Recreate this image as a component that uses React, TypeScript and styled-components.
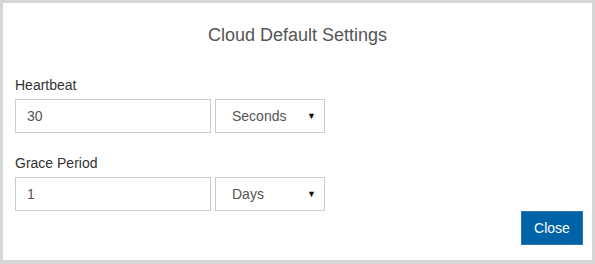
import React from 'react'
import styled, { createGlobalStyle } from 'styled-components'

const Global = createGlobalStyle`
  html, body {
    margin: 0;
    padding: 0;
    background: #ffffff;
  }
  body {
    font-family: 'Liberation Sans', Arial, sans-serif;
  }
`

const Dialog = styled.div`
  box-sizing: border-box;
  width: 595px;
  height: 264px;
  border: 3px solid #d6d6d6;
  border-bottom-width: 4px;
  background: #fff;
  display: flex;
  flex-direction: column;
`

const Titulo = styled.h1`
  margin: 20px 0 0;
  font-size: 18px;
  line-height: 24px;
  font-weight: normal;
  color: #555555;
  text-align: center;
`

const Form = styled.form`
  margin-top: 28px;
  padding-left: 12px;
  display: flex;
  flex-direction: column;
`

const Campo = styled.div<{ $gap?: number }>`
  margin-top: ${p => p.$gap ?? 0}px;
  display: flex;
  flex-direction: column;
`

const Rotulo = styled.label`
  font-size: 14px;
  line-height: 20px;
  color: #333333;
  margin-bottom: 4px;
`

const Linha = styled.div`
  display: flex;
  gap: 4px;
`

const Entrada = styled.input`
  box-sizing: border-box;
  width: 196px;
  height: 34px;
  border: 1px solid #cccccc;
  padding: 0 11px;
  font-family: 'Liberation Sans', Arial, sans-serif;
  font-size: 14px;
  color: #555555;
  outline: none;
`

const Seletor = styled.div`
  box-sizing: border-box;
  width: 110px;
  height: 34px;
  border: 1px solid #cccccc;
  padding: 0 8px 0 16px;
  display: flex;
  align-items: center;
  justify-content: space-between;
  font-size: 14px;
  color: #555555;
`

const Seta = styled.span`
  font-size: 9px;
  color: #111;
`

const Rodape = styled.div`
  display: flex;
  justify-content: flex-end;
  padding-right: 9px;
`

const Botao = styled.button`
  box-sizing: border-box;
  width: 62px;
  height: 34px;
  background: #0063a8;
  border: 1px solid #2b78b5;
  color: #fff;
  font-family: 'Liberation Sans', Arial, sans-serif;
  font-size: 14px;
  padding: 0;
  cursor: pointer;
`

export default function App() {
  return (
    <>
      <Global />
      <Dialog>
        <Titulo>Cloud Default Settings</Titulo>
        <Form>
          <Campo>
            <Rotulo>Heartbeat</Rotulo>
            <Linha>
              <Entrada defaultValue="30" />
              <Seletor>
                Seconds <Seta>▼</Seta>
              </Seletor>
            </Linha>
          </Campo>
          <Campo $gap={20}>
            <Rotulo>Grace Period</Rotulo>
            <Linha>
              <Entrada defaultValue="1" />
              <Seletor>
                Days <Seta>▼</Seta>
              </Seletor>
            </Linha>
          </Campo>
        </Form>
        <Rodape>
          <Botao type="button">Close</Botao>
        </Rodape>
      </Dialog>
    </>
  )
}
